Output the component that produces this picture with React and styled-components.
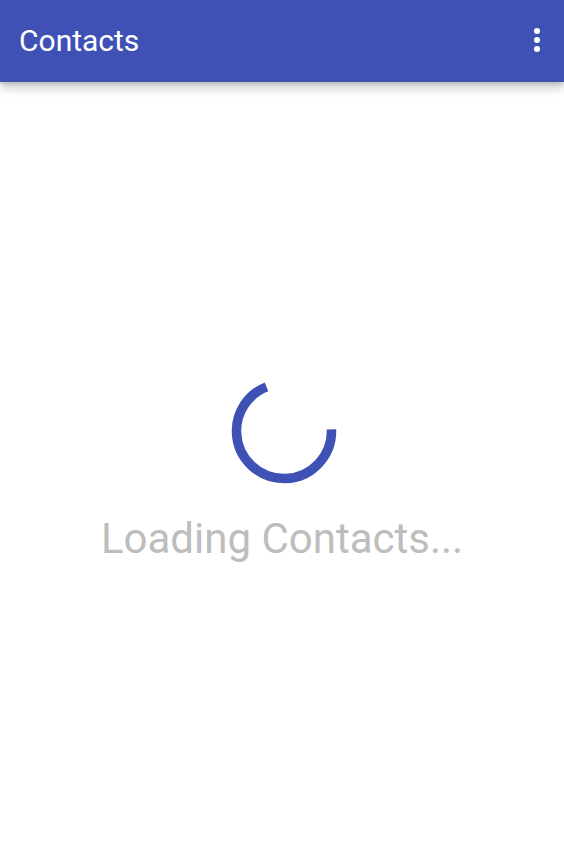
import React from "react";
import styled, { createGlobalStyle } from "styled-components";

const GlobalStyle = createGlobalStyle`
  html, body {
    margin: 0;
    padding: 0;
    background: #ffffff;
    font-family: Roboto, "Noto Sans", sans-serif;
  }
`;

const Page = styled.div`
  width: 564px;
  height: 848px;
  display: flex;
  flex-direction: column;
  background: #ffffff;
  overflow: hidden;
`;

const AppBar = styled.header`
  height: 82px;
  flex-shrink: 0;
  background: #3f51b5;
  display: flex;
  align-items: center;
  justify-content: space-between;
  padding: 0 24px 0 19px;
  box-shadow: 0 6px 10px rgba(0, 0, 0, 0.2), 0 2px 4px rgba(0, 0, 0, 0.12);
  position: relative;
  z-index: 1;
`;

const Title = styled.h1`
  margin: 0;
  color: #ffffff;
  font-size: 30px;
  font-weight: 400;
  line-height: 1;
  padding-bottom: 1px;
`;

const MenuButton = styled.div`
  display: flex;
  flex-direction: column;
  gap: 3px;
  padding-bottom: 2px;
`;

const Dot = styled.span`
  width: 6px;
  height: 6px;
  border-radius: 50%;
  background: #ffffff;
`;

const Content = styled.main`
  flex: 1;
  display: flex;
  flex-direction: column;
  align-items: center;
  justify-content: center;
  padding-top: 10px;
`;

const Spinner = styled.svg`
  width: 106px;
  height: 106px;
  display: block;
  margin-left: 4px;
`;

const LoadingText = styled.p`
  margin: 30px 0 0;
  color: #bdbdbd;
  font-size: 42px;
  font-weight: 400;
  line-height: 49px;
`;

const R = 47.5;
const C = 2 * Math.PI * R;

export default function App() {
  return (
    <>
      <GlobalStyle />
      <Page>
        <AppBar>
          <Title>Contacts</Title>
          <MenuButton>
            <Dot />
            <Dot />
            <Dot />
          </MenuButton>
        </AppBar>
        <Content>
          <Spinner viewBox="0 0 106 106">
            <circle
              cx="53"
              cy="53"
              r={R}
              fill="none"
              stroke="#3f51b5"
              strokeWidth="9.5"
              strokeDasharray={`${(C * 250) / 360} ${C}`}
              transform="rotate(-2 53 53)"
            />
          </Spinner>
          <LoadingText>Loading Contacts...</LoadingText>
        </Content>
      </Page>
    </>
  );
}
